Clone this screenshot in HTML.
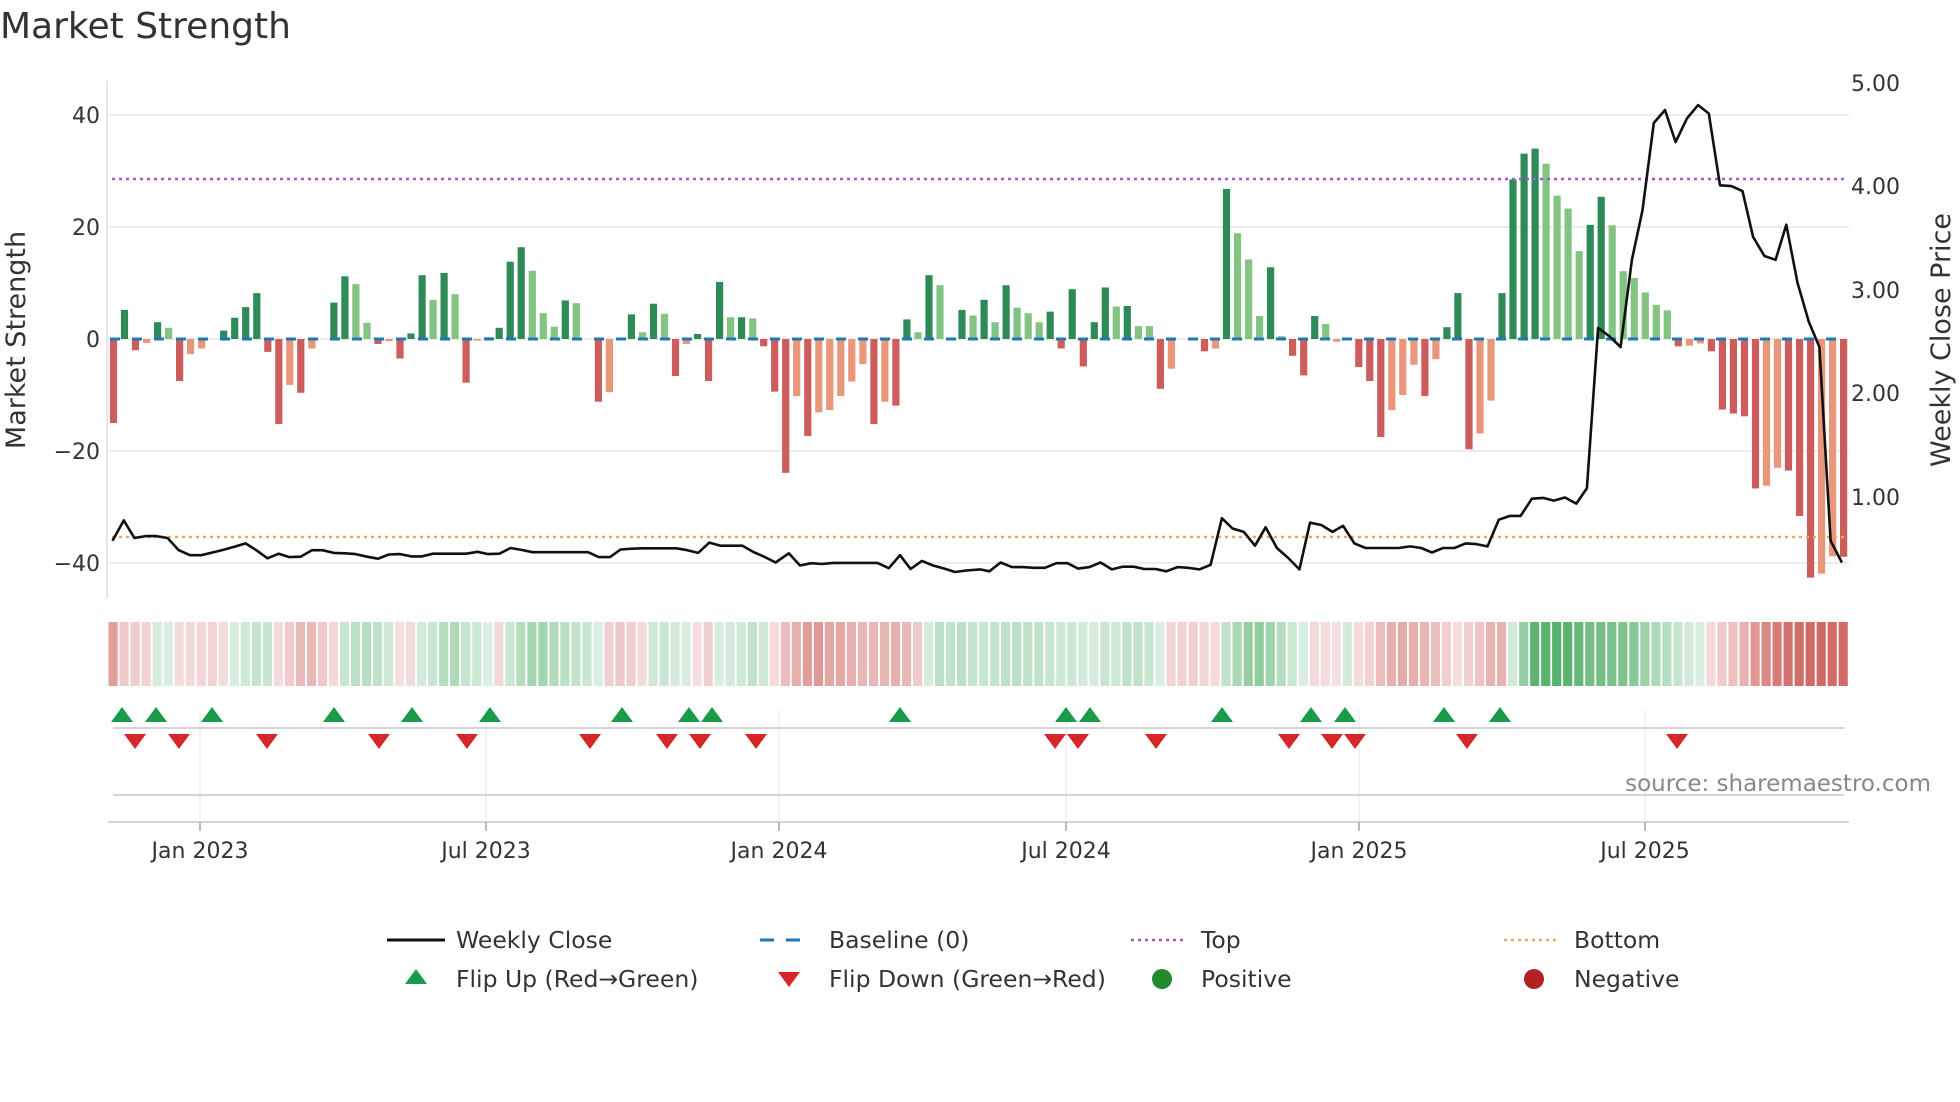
<!DOCTYPE html>
<html><head><meta charset="utf-8">
<style>
html,body{margin:0;padding:0;background:#fff;width:1960px;height:1102px;overflow:hidden}
svg{display:block;font-family:"DejaVu Sans","Liberation Sans",sans-serif}
</style></head><body>
<svg id="s" width="1960" height="1102" viewBox="0 0 1960 1102" xmlns="http://www.w3.org/2000/svg">
<rect width="1960" height="1102" fill="#fff"/>
<text x="0" y="38" font-size="36" fill="#333">Market Strength</text>
<g stroke="#ececec" stroke-width="2">
<line x1="108" y1="115" x2="1849" y2="115"/>
<line x1="108" y1="227" x2="1849" y2="227"/>
<line x1="108" y1="339" x2="1849" y2="339"/>
<line x1="108" y1="451" x2="1849" y2="451"/>
<line x1="108" y1="563" x2="1849" y2="563"/>
</g>
<line x1="107" y1="81" x2="107" y2="598" stroke="#e6e6e6" stroke-width="2"/>
<g font-size="22" fill="#333" text-anchor="end">
<text x="100" y="123">40</text>
<text x="100" y="235">20</text>
<text x="100" y="347">0</text>
<text x="100" y="459">−20</text>
<text x="100" y="571">−40</text>
</g>
<g font-size="22" fill="#333">
<text x="1851" y="91">5.00</text>
<text x="1851" y="194">4.00</text>
<text x="1851" y="298">3.00</text>
<text x="1851" y="401">2.00</text>
<text x="1851" y="505">1.00</text>
</g>
<text transform="translate(25,340) rotate(-90)" font-size="27" fill="#333" text-anchor="middle">Market Strength</text>
<text transform="translate(1950,340) rotate(-90)" font-size="27" fill="#333" text-anchor="middle">Weekly Close Price</text>
<g id="bars"></g>
<line x1="112" y1="179" x2="1845" y2="179" stroke="#9b59d6" stroke-width="2.5" stroke-dasharray="3,4"/>
<line x1="112" y1="537" x2="1845" y2="537" stroke="#f0a460" stroke-width="2.5" stroke-dasharray="3,4"/>
<line x1="110" y1="339" x2="1845" y2="339" stroke="#1f77b4" stroke-width="3" stroke-dasharray="10,12"/>
<g id="price" fill="none" stroke="#111" stroke-width="2.6" stroke-linejoin="round"></g>
<g id="strip"></g>
<g stroke="#eceff2" stroke-width="1.5">
<line x1="200" y1="710" x2="200" y2="822"/><line x1="486" y1="710" x2="486" y2="822"/>
<line x1="779" y1="710" x2="779" y2="822"/><line x1="1066" y1="710" x2="1066" y2="822"/>
<line x1="1359" y1="710" x2="1359" y2="822"/><line x1="1645" y1="710" x2="1645" y2="822"/>
</g>
<line x1="113" y1="728" x2="1844" y2="728" stroke="#d4d4d4" stroke-width="2"/>
<line x1="113" y1="795" x2="1844" y2="795" stroke="#d4d4d4" stroke-width="2"/>
<line x1="108" y1="822" x2="1849" y2="822" stroke="#d4d4d4" stroke-width="2"/>
<g stroke="#bbb" stroke-width="2">
<line x1="200" y1="822" x2="200" y2="831"/><line x1="486" y1="822" x2="486" y2="831"/>
<line x1="779" y1="822" x2="779" y2="831"/><line x1="1066" y1="822" x2="1066" y2="831"/>
<line x1="1359" y1="822" x2="1359" y2="831"/><line x1="1645" y1="822" x2="1645" y2="831"/>
</g>
<g id="tri"></g>
<text x="1931" y="791" font-size="23" fill="#888" text-anchor="end">source: sharemaestro.com</text>
<g font-size="22" fill="#333" text-anchor="middle">
<text x="200" y="858">Jan 2023</text><text x="486" y="858">Jul 2023</text>
<text x="779" y="858">Jan 2024</text><text x="1066" y="858">Jul 2024</text>
<text x="1359" y="858">Jan 2025</text><text x="1645" y="858">Jul 2025</text>
</g>
<g font-size="23.5" fill="#333">
<line x1="387" y1="940" x2="445" y2="940" stroke="#111" stroke-width="3"/>
<text x="456" y="948">Weekly Close</text>
<line x1="760" y1="940" x2="812" y2="940" stroke="#1f77b4" stroke-width="3" stroke-dasharray="14,12"/>
<text x="829" y="948">Baseline (0)</text>
<line x1="1131" y1="940" x2="1185" y2="940" stroke="#9b59d6" stroke-width="2.5" stroke-dasharray="3,4"/>
<text x="1201" y="948">Top</text>
<line x1="1504" y1="940" x2="1559" y2="940" stroke="#f0a460" stroke-width="2.5" stroke-dasharray="3,4"/>
<text x="1574" y="948">Bottom</text>
<polygon points="416,969 427,984 405,984" fill="#1a9b4a"/>
<text x="456" y="987">Flip Up (Red→Green)</text>
<polygon points="778,972 800,972 789,987" fill="#d62728"/>
<text x="829" y="987">Flip Down (Green→Red)</text>
<circle cx="1162" cy="979" r="10" fill="#238b2d"/>
<text x="1201" y="987">Positive</text>
<circle cx="1534" cy="979" r="10" fill="#b22222"/>
<text x="1574" y="987">Negative</text>
</g>
</svg>
<script>
var NS="http://www.w3.org/2000/svg";
function el(t,a,p){var e=document.createElementNS(NS,t);for(var k in a)e.setAttribute(k,a[k]);p.appendChild(e);return e;}
var d="-15R 5.2G -2R -0.7S 3G 2L -7.5R -2.7S -1.7S 0G 1.5G 3.8G 5.7G 8.2G -2.3R -15.2R -8.2S -9.6R -1.7S 0G 6.5G 11.2G 9.8L 2.9L -0.9R -0.4S -3.5R 1G 11.4G 7L 11.8G 8L -7.8R -0.3S 0.3G 2G 13.8G 16.4G 12.2L 4.6L 2.2L 6.9G 6.4L 0G -11.2R -9.5S 0G 4.4G 1.2L 6.3G 4.5L -6.6R -0.9S 0.9G -7.5R 10.2G 3.9L 3.9G 3.7L -1.3R -9.4R -23.9R -10.2S -17.3R -13.1S -12.7S -10.2S -7.6S -4.5S -15.2R -11.2S -11.9R 3.5G 1.2L 11.4G 9.6L 0G 5.2G 4.2L 7G 3L 9.6G 5.6L 4.6L 3L 4.9G -1.7R 8.9G -4.9R 3G 9.2G 5.8L 5.9G 2.3L 2.3L -8.9R -5.3S 0G 0G -2.2R -1.7S 26.8G 18.9L 14.2L 4.1L 12.8G 0.5L -3R -6.5R 4.1G 2.7L -0.5S 0G -5R -7.5R -17.5R -12.7S -10S -4.6S -10.2R -3.6S 2.1G 8.2G -19.7R -16.9S -11S 8.2G 28.5G 33.1G 34G 31.3L 25.6L 23.3L 15.7L 20.4G 25.4G 20.3L 12.1L 10.9L 8.3L 6.1L 5.1L -1.3R -1.2S -0.8S -2.2R -12.6R -13.3R -13.8R -26.7R -26.2S -23S -23.5R -31.6R -42.6R -41.9S -38.8S -38.9R".split(" ");
var col={G:"#2e8b57",L:"#83c483",R:"#cd5c5c",S:"#e9967a"};
var bars=document.getElementById("bars"),strip=document.getElementById("strip");
var vals=[];
for(var i=0;i<d.length;i++){
 var v=parseFloat(d[i]),t=d[i].slice(-1);vals.push(v);
 var x=113.5+i*11.02, y0=339, h=Math.abs(v)*5.6;
 if(h>0.5) el("rect",{x:(x-3.6).toFixed(1),y:(v>0?y0-h:y0).toFixed(1),width:7.2,height:h.toFixed(1),fill:col[t]},bars);
}
for(var i=0;i<vals.length;i++){
 var s=0,n=0;for(var j=Math.max(0,i-3);j<=i;j++){s+=vals[j];n++;}
 var m=s/n, a=Math.min(0.85,0.18+Math.abs(m)/40);
 var c=m>=0?"rgba(60,165,85,"+a.toFixed(2)+")":"rgba(200,80,75,"+a.toFixed(2)+")";
 el("rect",{x:(108.5+i*11.02).toFixed(1),y:622,width:9.2,height:64,fill:c},strip);
}
var p1="180,1415 198,1362 215,1408 233,1403 250,1403 268,1408 286,1440 304,1453 322,1453 340,1446 357,1439 375,1431 393,1422 410,1440 428,1461 446,1449 463,1458 481,1457 499,1440 516,1440 534,1447 552,1448 569,1450 587,1457 605,1462 622,1451 640,1450 658,1456 675,1456 693,1449 711,1449 728,1449 746,1449 764,1444 781,1450 799,1449 817,1434 834,1439 852,1445 870,1445 887,1445 905,1445 923,1445 941,1445 958,1458 976,1458 993,1438 1011,1436 1029,1435 1046,1435 1064,1435 1082,1435 1100,1440 1117,1447 1135,1420 1153,1428 1170,1428 1188,1428 1206,1445 1224,1458 1241,1472 1262,1448 1280,1480 1298,1474 1315,1476 1333,1473 1351,1473 1369,1473 1386,1473 1404,1473 1422,1487 1440,1453 1457,1489 1475,1468 1493,1480 1511,1488 1528,1497 1546,1493 1568,1490";
var p2="0,1490 15,1495 33,1472 51,1484 68,1484 86,1486 104,1486 122,1474 140,1474 157,1488 175,1484 193,1472 211,1490 228,1483 246,1483 263,1489 281,1489 298,1495 316,1484 333,1486 351,1490 369,1478 387,1356 404,1383 422,1392 440,1428 457,1380 475,1434 493,1460 511,1490 528,1368 546,1374 564,1392 581,1376 599,1422 617,1434 635,1434 652,1434 670,1434 688,1430 706,1434 723,1446 741,1434 759,1434 777,1422 794,1424 812,1430 830,1360 848,1350 865,1350 883,1305 901,1303 918,1310 936,1302 954,1318 971,1278 989,858 1007,880 1025,908 1043,680 1060,550 1078,322 1096,288 1113,372 1131,310 1149,275 1166,297 1184,485 1202,487 1220,500 1237,620 1255,670 1273,680 1290,588 1308,740 1326,842 1343,908 1361,1415 1379,1472";
var pg=document.getElementById("price");
function conv(s,ox){return s.split(" ").map(function(q){var a=q.split(",");return (ox+a[0]/1.6).toFixed(1)+","+(a[1]/2.617).toFixed(1);}).join(" ");}
el("polyline",{points:conv(p1,0)+" "+conv(p2,980)},pg);
var tg=document.getElementById("tri");
[122,156,212,334,412,490,622,689,712,900,1066,1090,1222,1311,1345,1444,1500].forEach(function(x){
 el("polygon",{points:x+",707 "+(x+11)+",722 "+(x-11)+",722",fill:"#1a9b4a"},tg);});
[135,179,267,379,467,590,667,700,756,1055,1078,1156,1289,1332,1355,1467,1677].forEach(function(x){
 el("polygon",{points:(x-11)+",734 "+(x+11)+",734 "+x+",749",fill:"#d62728"},tg);});
</script>
</body></html>
